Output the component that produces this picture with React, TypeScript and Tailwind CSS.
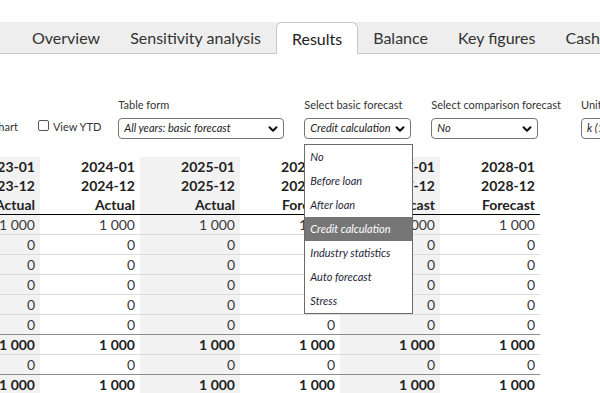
import React from 'react'
import { ChevronDown } from 'lucide-react'

const tabs = ['Overview', 'Sensitivity analysis', 'Results', 'Balance', 'Key figures', 'Cash flow']

const years = [
  { y: '2023', t: 'Actual', shade: true },
  { y: '2024', t: 'Actual', shade: false },
  { y: '2025', t: 'Actual', shade: true },
  { y: '2026', t: 'Forecast', shade: false },
  { y: '2027', t: 'Forecast', shade: true },
  { y: '2028', t: 'Forecast', shade: false },
]

const rows = [
  { v: '1 000', bold: false, line: 'border-[#dcdcdc]' },
  { v: '0', bold: false, line: 'border-[#dcdcdc]' },
  { v: '0', bold: false, line: 'border-[#dcdcdc]' },
  { v: '0', bold: false, line: 'border-[#dcdcdc]' },
  { v: '0', bold: false, line: 'border-[#dcdcdc]' },
  { v: '0', bold: false, line: 'border-[#8c8c8c]' },
  { v: '1 000', bold: true, line: 'border-[#dcdcdc]' },
  { v: '0', bold: false, line: 'border-[#8c8c8c]' },
  { v: '1 000', bold: true, line: 'border-transparent' },
]

const options = ['No', 'Before loan', 'After loan', 'Credit calculation', 'Industry statistics', 'Auto forecast', 'Stress']

type FieldProps = { label: string; value: string; width: string; open?: boolean }

const Field = ({ label, value, width, open }: FieldProps) => {
  return (
    <div className="flex flex-col">
      <div className="mb-[6px] whitespace-nowrap leading-[14px] text-[#333]">{label}</div>
      <div className={`relative flex h-[21px] items-center justify-between rounded-[4px] border border-[#767676] bg-white pl-[5px] pr-[3px] ${width}`}>
        <span className="whitespace-nowrap italic text-[#222]">{value}</span>
        <ChevronDown size={14} strokeWidth={3.5} className="shrink-0 text-[#111]" />
        {open && (
          <div className="absolute left-[-1px] top-[25px] z-10 w-[109px] border border-[#6b6b6b] bg-white">
            {options.map((o) => (
              <div
                key={o}
                className={`flex h-[24px] items-center whitespace-nowrap pl-[5px] italic ${o === 'Credit calculation' ? 'bg-[#767676] text-white' : 'text-[#1f1f3a]'}`}
              >
                {o}
              </div>
            ))}
          </div>
        )}
      </div>
    </div>
  )
}

export default function App() {
  return (
    <div className="h-[393px] w-[600px] overflow-hidden bg-white font-['Lato',sans-serif] text-[#333]">
      <div className="h-[22px]" />
      <div className="flex h-[32px] items-stretch border-b border-[#c8c8c8] bg-[#eeeeee] pl-[17px] text-[16px]">
        {tabs.map((t) =>
          t === 'Results' ? (
            <div key={t} className="-mb-px flex items-center whitespace-nowrap rounded-t-[6px] border border-b-0 border-[#c8c8c8] bg-white px-[15px] text-[#222]">
              {t}
            </div>
          ) : (
            <div key={t} className="flex items-center whitespace-nowrap px-[15px] text-[#333]">
              {t}
            </div>
          )
        )}
      </div>

      <div className="mt-[44px] flex items-end gap-5 text-[11px]">
        <div className="-ml-[9px] flex h-[21px] items-center whitespace-nowrap pb-[3px]">Chart</div>
        <div className="-mr-[3px] flex h-[21px] items-center gap-1 whitespace-nowrap pb-[3px]">
          <span className="mb-[3px] h-[11px] w-[11px] rounded-[2px] border border-[#555] bg-white" />
          View YTD
        </div>
        <Field label="Table form" value="All years: basic forecast" width="w-[166px]" />
        <Field label="Select basic forecast" value="Credit calculation" width="w-[107px]" open />
        <Field label="Select comparison forecast" value="No" width="w-[107px]" />
        <Field label="Unit" value="k (1 000)" width="w-[107px]" />
      </div>

      <div className="-ml-[60px] mt-[18px] w-[600px]">
        <div className="flex h-[58px] border-b border-black text-[14px] font-bold leading-[19px] text-[#222]">
          {years.map((y) => (
            <div key={y.y} className={`flex w-[100px] flex-col items-end pr-[5px] ${y.shade ? 'bg-[#f2f2f2]' : ''}`}>
              <span>{y.y}-01</span>
              <span>{y.y}-12</span>
              <span>{y.t}</span>
            </div>
          ))}
        </div>
        {rows.map((r, i) => (
          <div key={i} className={`flex h-[20px] border-b text-[14px] ${r.line} ${r.bold ? 'font-bold text-[#222]' : 'text-[#3a3a3a]'}`}>
            {years.map((y) => (
              <div key={y.y} className={`flex w-[100px] items-center justify-end pr-[5px] ${y.shade ? 'bg-[#f2f2f2]' : ''}`}>
                {r.v}
              </div>
            ))}
          </div>
        ))}
      </div>
    </div>
  )
}
